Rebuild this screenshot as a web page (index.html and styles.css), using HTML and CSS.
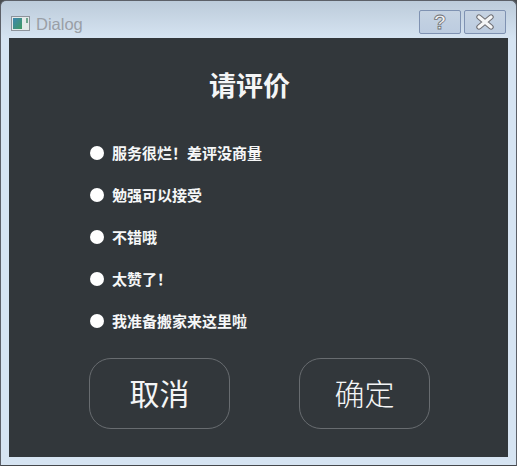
FILE: index.html
```html
<!DOCTYPE html>
<html lang="zh-CN">

<head>
  <meta charset="UTF-8">
  <title>Dialog</title>
  <link rel="stylesheet" href="styles.css">
</head>

<body>
  <div class="window">
    <div class="titlebar">
      <svg class="app-icon" width="20" height="16" viewBox="0 0 20 16">
        <defs>
          <linearGradient id="icon-fill" x1="0" y1="0" x2="1" y2="1">
            <stop offset="0" stop-color="#3f86b0"/>
            <stop offset="1" stop-color="#3f9a62"/>
          </linearGradient>
        </defs>
        <rect x="0.5" y="0.5" width="18" height="14" fill="#e4eaea" stroke="#8d939b"/>
        <rect x="2" y="2" width="9" height="11" fill="url(#icon-fill)"/>
        <rect x="15" y="2" width="2" height="5" fill="#6fa58e"/>
      </svg>
      <span class="title">Dialog</span>
      <div class="window-buttons">
        <button class="win-btn" type="button"><span class="help-mark">?</span></button>
        <button class="win-btn" type="button">
          <svg width="20" height="16" viewBox="0 0 20 16">
            <path d="M4 3 L16 13 M16 3 L4 13" stroke="#6e6e72" stroke-width="5.4" stroke-linecap="round"/>
            <path d="M4 3 L16 13 M16 3 L4 13" stroke="#f4f5f6" stroke-width="3.4" stroke-linecap="round"/>
          </svg>
        </button>
      </div>
    </div>
    <div class="panel">
      <h1>请评价</h1>
      <ul class="options">
        <li class="option"><span class="dot"></span>服务很烂！差评没商量</li>
        <li class="option"><span class="dot"></span>勉强可以接受</li>
        <li class="option"><span class="dot"></span>不错哦</li>
        <li class="option"><span class="dot"></span>太赞了！</li>
        <li class="option"><span class="dot"></span>我准备搬家来这里啦</li>
      </ul>
      <div class="actions">
        <button class="action cancel" type="button">取消</button>
        <button class="action ok" type="button">确定</button>
      </div>
    </div>
  </div>
</body>

</html>
```

FILE: styles.css
```css
html,
body {
  margin: 0;
  height: 100%;
}

body {
  font-family: "Noto Sans CJK SC", "Liberation Sans", sans-serif;
  background-color: #4a4d50;
}

.window {
  box-sizing: border-box;
  width: 517px;
  height: 466px;
  padding: 0 8px 8px;
  display: flex;
  flex-direction: column;
  border: 1px solid #5c6068;
  border-bottom-color: #45484c;
  border-radius: 6px 6px 0 0;
  background: linear-gradient(#bccbda, #d6e4f2 38px);
}

.titlebar {
  height: 37px;
  flex: none;
  display: flex;
  align-items: center;
  padding-left: 2px;
}

.app-icon {
  margin-top: 9px;
}

.title {
  margin-left: 5px;
  margin-top: 9px;
  font-family: "Liberation Sans", Arial, sans-serif;
  font-size: 16.5px;
  color: #9a9fa6;
}

.window-buttons {
  margin-left: auto;
  margin-right: 2px;
  margin-top: 5px;
  display: flex;
  gap: 3px;
}

.win-btn {
  width: 42px;
  height: 24px;
  padding: 0;
  display: flex;
  align-items: center;
  justify-content: center;
  border: 1px solid #7f92b2;
  border-radius: 2px;
  background: linear-gradient(#c6d3e2, #bccce0);
}

.help-mark {
  font-family: "Liberation Sans", Arial, sans-serif;
  font-size: 21px;
  font-weight: bold;
  color: #f1f2f3;
  -webkit-text-stroke: 0.8px #6e7074;
}

.panel {
  flex: 1;
  display: flex;
  flex-direction: column;
  background-color: #32373b;
  padding-left: 80px;
}

h1 {
  margin: 27px 0 0 120px;
  height: 40px;
  line-height: 40px;
  font-size: 27px;
  font-weight: bold;
  color: #f4f5f6;
}

.options {
  list-style: none;
  margin: 26px 0 0;
  padding: 0;
}

.option {
  height: 42px;
  display: flex;
  align-items: center;
  font-size: 15px;
  font-weight: bold;
  color: #f6f7f8;
}

.dot {
  width: 14px;
  height: 14px;
  margin: 1px 8px 0 1px;
  border-radius: 50%;
  background-color: #fff;
}

.actions {
  display: flex;
  gap: 69px;
  margin-top: 17px;
}

.action {
  box-sizing: border-box;
  height: 71px;
  padding: 0 0 3px;
  border: 1px solid #686c70;
  border-radius: 22px;
  background: none;
  font-family: inherit;
  font-size: 30px;
  color: #f4f5f6;
}

.cancel {
  width: 141px;
}

.ok {
  width: 131px;
  font-weight: 300;
}
```
